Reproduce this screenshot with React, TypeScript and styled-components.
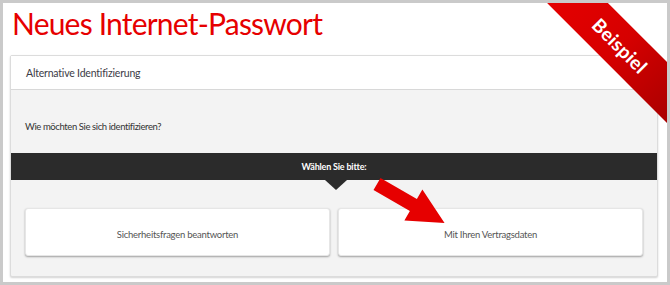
import React from 'react';
import styled, { createGlobalStyle } from 'styled-components';

const GlobalStyle = createGlobalStyle`
	html, body {
		margin: 0;
		padding: 0;
		background: #ffffff;
	}
`;

const Frame = styled.div`
	position: relative;
	box-sizing: border-box;
	width: 670px;
	height: 285px;
	border: 3px solid #cacaca;
	background: #ffffff;
	padding: 0 9px 0 7px;
	overflow: hidden;
	font-family: Lato, 'Open Sans', sans-serif;
	color: #333;
`;

const Title = styled.h1`
	margin: 0;
	height: 52px;
	padding: 2px 0 0 2px;
	box-sizing: border-box;
	font-size: 30px;
	line-height: 36px;
	font-weight: 400;
	color: #e60000;
	letter-spacing: -0.8px;
`;

const Panel = styled.section`
	border: 1px solid #dcdcdc;
	border-radius: 2px;
	box-shadow: 0 1px 2px rgba(0, 0, 0, 0.18);
	background: #f3f3f3;
`;

const PanelHeader = styled.div`
	height: 33px;
	display: flex;
	align-items: center;
	padding-left: 15px;
	background: #ffffff;
	border-bottom: 1px solid #d8d8d8;
	font-size: 10.5px;
	letter-spacing: -0.2px;
	color: #3c3c46;
`;

const Question = styled.div`
	height: 63px;
	box-sizing: border-box;
	padding: 9px 0 0 14px;
	display: flex;
	align-items: center;
	font-size: 9.5px;
	letter-spacing: -0.4px;
	color: #333;
`;

const ChoiceBar = styled.div`
	position: relative;
	height: 27px;
	display: flex;
	align-items: center;
	justify-content: center;
	background: #2b2b2b;
	color: #ffffff;
	font-size: 9px;
	font-weight: 700;
	letter-spacing: -0.2px;

	&::after {
		content: '';
		position: absolute;
		left: calc(50% + 2px);
		bottom: -10px;
		transform: translateX(-50%);
		border-left: 11px solid transparent;
		border-right: 11px solid transparent;
		border-top: 10px solid #2b2b2b;
	}
`;

const Options = styled.div`
	display: grid;
	grid-template-columns: 1fr 1fr;
	gap: 8px;
	padding: 28px 14px 20px;
`;

const Option = styled.button`
	height: 48px;
	border: 1px solid #e6e6e6;
	border-radius: 3px;
	background: #ffffff;
	box-shadow: 0 1px 2px rgba(0, 0, 0, 0.35);
	font-family: inherit;
	font-size: 9.5px;
	letter-spacing: -0.25px;
	color: #555;
	padding: 4px 0 0;
	cursor: pointer;
`;

const Arrow = styled.svg`
	position: absolute;
	left: 360px;
	top: 170px;
	width: 90px;
	height: 60px;
	overflow: visible;
`;

const Corner = styled.div`
	position: absolute;
	top: 0;
	right: 0;
	width: 130px;
	height: 130px;
	overflow: hidden;
	pointer-events: none;
`;

const Ribbon = styled.div`
	position: absolute;
	left: -17px;
	top: 21px;
	width: 200px;
	height: 43px;
	transform: rotate(45deg);
	background: linear-gradient(to right, #e80000 0%, #d60000 50%, #a30000 100%);
	color: #ffffff;
	font-size: 19px;
	font-weight: 700;
	display: flex;
	align-items: center;
	justify-content: center;
	letter-spacing: 0.3px;
`;

const App = () => (
	<>
		<GlobalStyle />
		<Frame>
			<Title>Neues Internet-Passwort</Title>
			<Panel>
				<PanelHeader>Alternative Identifizierung</PanelHeader>
				<Question>Wie möchten Sie sich identifizieren?</Question>
				<ChoiceBar>Wählen Sie bitte:</ChoiceBar>
				<Options>
					<Option>Sicherheitsfragen beantworten</Option>
					<Option>Mit Ihren Vertragsdaten</Option>
				</Options>
			</Panel>
			<Arrow viewBox="0 0 90 60">
				<polygon
					transform="translate(14 11) rotate(30)"
					points="0,-7 42,-7 42,-18 78,0 42,18 42,7 0,7"
					fill="#e60000"
				/>
			</Arrow>
			<Corner>
				<Ribbon>Beispiel</Ribbon>
			</Corner>
		</Frame>
	</>
);

export default App;
